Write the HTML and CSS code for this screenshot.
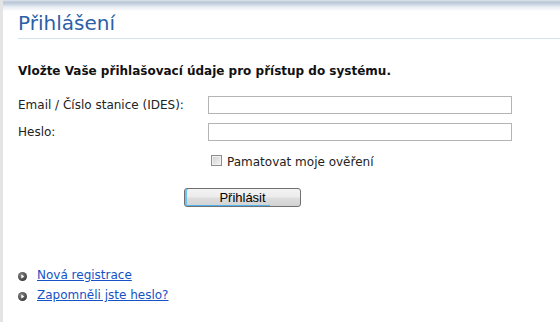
FILE: index.html
```html
<!DOCTYPE html>
<html lang="cs">
<head>
<meta charset="utf-8">
<title>Přihlášení</title>
<link rel="stylesheet" href="styles.css">
</head>
<body>
<div class="page">
  <div class="strip"></div>
  <div class="main">
    <div class="topband"></div>
    <div class="content">
      <h1 class="title">Přihlášení</h1>
      <p class="intro">Vložte Vaše přihlašovací údaje pro přístup do systému.</p>
      <form class="form">
        <div class="grid">
          <label class="lbl" for="email">Email / Číslo stanice (IDES):</label>
          <input class="field" id="email" type="text">
          <label class="lbl" for="pwd">Heslo:</label>
          <input class="field" id="pwd" type="password">
        </div>
        <div class="remember">
          <input class="check" type="checkbox" id="rem">
          <label for="rem" class="remlbl">Pamatovat moje ověření</label>
        </div>
        <div class="btnrow">
          <button type="button" class="btn">Přihlásit</button>
        </div>
      </form>
      <ul class="links">
        <li class="linkitem">
          <svg class="bullet" width="9" height="9" viewBox="0 0 9 9"><defs><radialGradient id="g1" cx="40%" cy="35%" r="65%"><stop offset="0" stop-color="#8a8a8a"/><stop offset="1" stop-color="#3a3a3a"/></radialGradient></defs><circle cx="4.5" cy="4.5" r="4.5" fill="url(#g1)"/><path d="M3.3 2.4 L6.3 4.5 L3.3 6.6 Z" fill="#fff"/></svg>
          <a class="link" href="#">Nová registrace</a>
        </li>
        <li class="linkitem">
          <svg class="bullet" width="9" height="9" viewBox="0 0 9 9"><defs><radialGradient id="g2" cx="40%" cy="35%" r="65%"><stop offset="0" stop-color="#8a8a8a"/><stop offset="1" stop-color="#3a3a3a"/></radialGradient></defs><circle cx="4.5" cy="4.5" r="4.5" fill="url(#g2)"/><path d="M3.3 2.4 L6.3 4.5 L3.3 6.6 Z" fill="#fff"/></svg>
          <a class="link" href="#">Zapomněli jste heslo?</a>
        </li>
      </ul>
    </div>
  </div>
</div>
</body>
</html>
```
FILE: styles.css
```css
html, body {
  margin: 0;
  padding: 0;
  background: #fff;
}
body {
  font-family: "DejaVu Sans", Verdana, sans-serif;
  font-size: 12px;
  color: #1e1e1e;
}
.page {
  display: flex;
  min-height: 322px;
}
.strip {
  width: 3px;
  background: #e4e4e4;
  flex: none;
}
.main {
  flex: 1;
}
.topband {
  height: 11px;
  background: linear-gradient(#dfe5ec 0, #b9c7d6 2px, #c6d2df 4px, #e8eef4 7px, #f7f9fb 10px, #fff 11px);
}
.content {
  padding-left: 15px;
}
.title {
  margin: 0;
  font-size: 20px;
  line-height: 24px;
  font-weight: normal;
  color: #2b5fa7;
  padding-bottom: 3px;
  border-bottom: 1px solid #d3e3ef;
}
.intro {
  margin: 25px 0 17px;
  font-weight: bold;
  line-height: 15px;
  color: #111;
}
.grid {
  display: grid;
  grid-template-columns: 190px 304px;
  row-gap: 9px;
  align-items: center;
}
.lbl {
  line-height: 15px;
  color: #222;
}
.field {
  box-sizing: border-box;
  height: 18px;
  width: 304px;
  margin: 0;
  border: 1px solid #b4b4b4;
  background: #fff;
  padding: 0 2px;
  font: inherit;
}
.remember {
  display: flex;
  align-items: flex-start;
  margin: 14px 0 0 193px;
  line-height: 15px;
}
.check {
  appearance: none;
  -webkit-appearance: none;
  box-sizing: border-box;
  width: 11px;
  height: 11px;
  margin: 0 5px 0 0;
  border: 1px solid #8e8e8e;
  background: linear-gradient(135deg, #d0d0d0, #f4f4f4);
  box-shadow: inset 0 0 0 1px #f0f0f0;
}
.remlbl {
  color: #222;
}
.btnrow {
  margin: 18px 0 0 166px;
}
.btn {
  box-sizing: border-box;
  width: 117px;
  height: 19px;
  padding: 0;
  margin: 0;
  border: 1px solid #707070;
  border-radius: 3px;
  font-family: "Liberation Sans", Arial, sans-serif;
  font-size: 13px;
  line-height: 16px;
  color: #000;
  background:
    linear-gradient(#4fb4ee, #4fb4ee) left bottom / 74% 1px no-repeat,
    linear-gradient(#f3f3f3 0, #ececec 48%, #dedede 52%, #d2d2d2 100%);
  box-shadow: inset 2px 0 0 #6ec3f0;
}
.links {
  list-style: none;
  margin: 58px 0 0;
  padding: 0;
}
.linkitem {
  display: flex;
  align-items: center;
  height: 20px;
  line-height: 20px;
}
.bullet {
  flex: none;
  margin-right: 10px;
  position: relative;
  top: 1px;
}
.link {
  color: #1552c4;
  text-decoration: underline;
}
```
